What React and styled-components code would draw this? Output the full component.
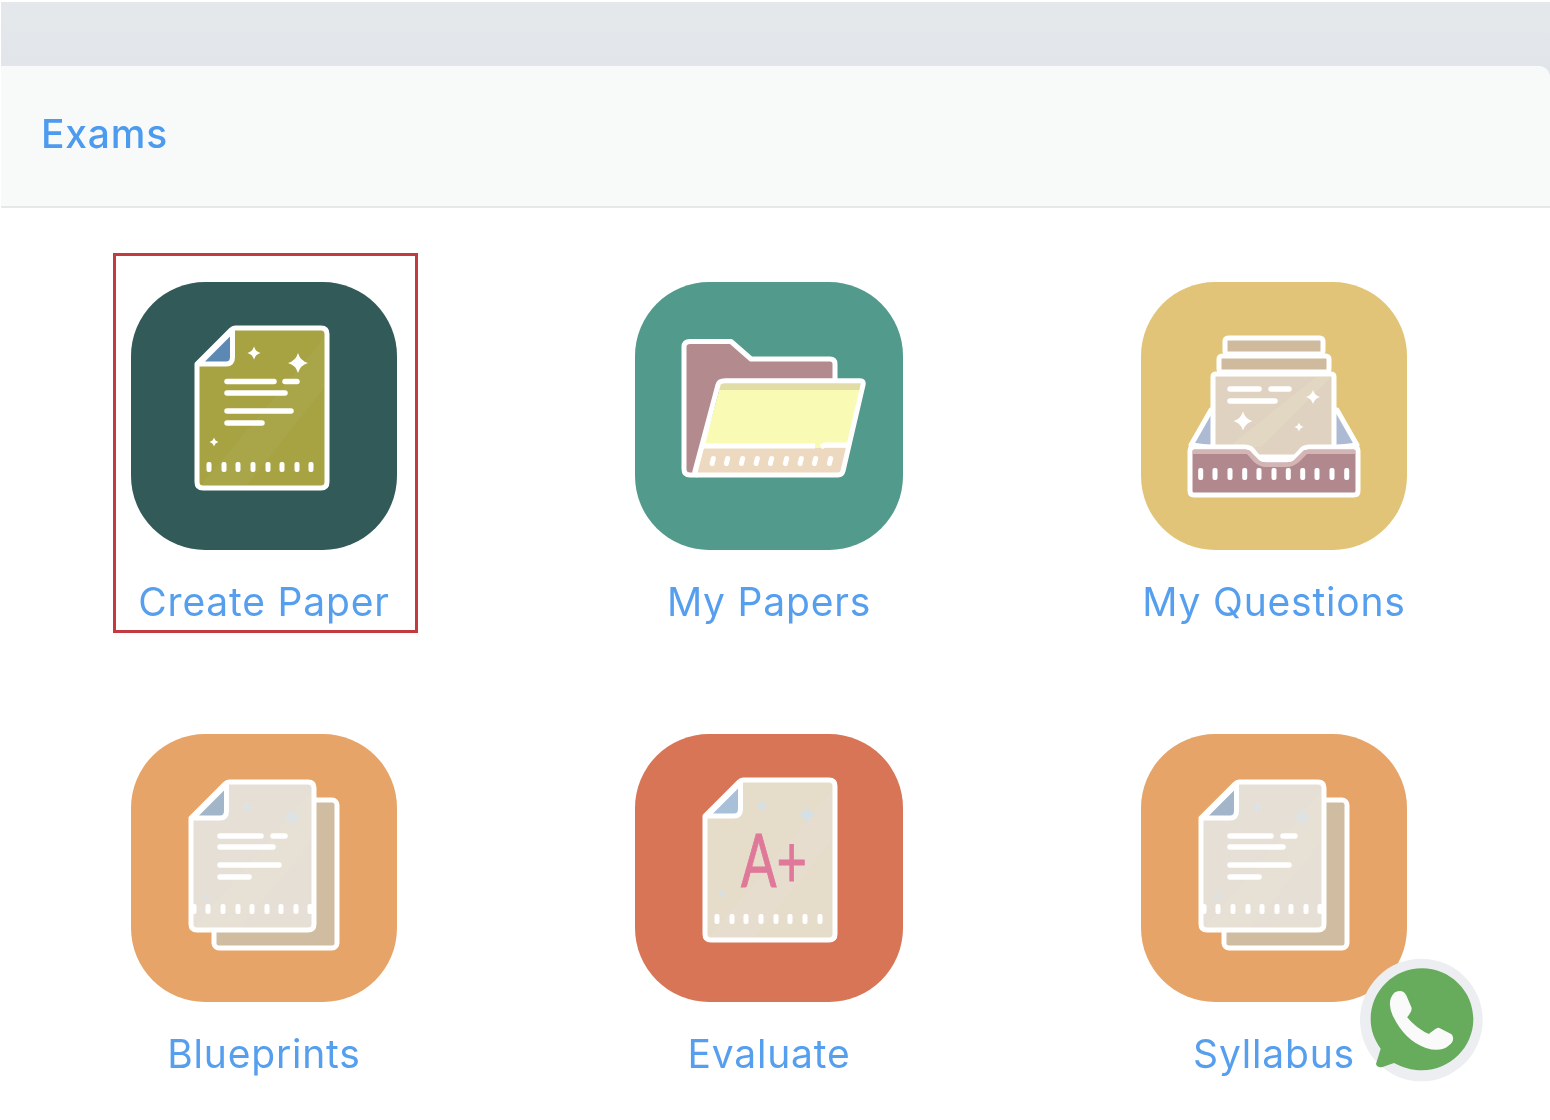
import React from 'react';
import styled, { createGlobalStyle } from 'styled-components';

const GlobalStyle = createGlobalStyle`
  html, body {
    margin: 0;
    padding: 0;
    background: #ffffff;
  }
  body {
    font-family: Inter, "Noto Sans", sans-serif;
  }
`;

const Page = styled.div`
  position: relative;
  display: flex;
  flex-direction: column;
  width: 1550px;
  height: 1120px;
  overflow: hidden;
  padding-top: 2px;
  box-sizing: border-box;
  background: #ffffff linear-gradient(180deg, #ffffff 0, #ffffff 2px, #e5e8eb 2px, #e1e5ea 76px, #ffffff 76px) 1px 0 no-repeat;
`;

const Card = styled.section`
  flex: 1;
  margin: 64px 0 0 1px;
  background: #ffffff;
  border-radius: 0 12px 0 0;
`;

const CardHeader = styled.header`
  height: 142px;
  display: flex;
  align-items: center;
  padding: 0 0 5px 40px;
  box-sizing: border-box;
  background: #f8faf9;
  border-bottom: 2px solid #e6e8e8;
  border-radius: 0 12px 0 0;
`;

const Title = styled.h1`
  margin: 0;
  font-size: 39px;
  line-height: 46px;
  font-weight: 500;
  letter-spacing: 0.8px;
  color: #4d9bef;
  filter: blur(0.4px);
`;

const Grid = styled.div`
  display: grid;
  grid-template-columns: repeat(3, 505px);
  grid-auto-rows: 452px;
  padding: 74px 0 0 10.5px;
`;

const Item = styled.a`
  display: flex;
  flex-direction: column;
  align-items: center;
  color: #559fee;
  text-decoration: none;
`;

const Tile = styled.div`
  width: ${(p) => (p.$wide ? 268 : 266)}px;
  height: 268px;
  border-radius: 74px;
  background: ${(p) => p.$color};
  display: flex;
  align-items: center;
  justify-content: center;
`;

const Label = styled.span`
  margin-top: 28px;
  font-size: 39px;
  line-height: 48px;
  letter-spacing: 0.8px;
  white-space: nowrap;
  filter: blur(0.4px);
`;

const FooterStrip = styled.footer`
  height: 12px;
  background: #f8f9fd;
`;

const FocusBox = styled.span`
  position: absolute;
  left: 113px;
  top: 253px;
  width: 305px;
  height: 380px;
  box-sizing: border-box;
  border: 3px solid #c23b3e;
  pointer-events: none;
`;

const Chat = styled.svg`
  position: absolute;
  left: 1340px;
  top: 940px;
  width: 160px;
  height: 160px;
  filter: blur(0.4px);
`;

const Art = styled.svg`
  display: block;
  width: 100%;
  height: 100%;
  filter: blur(0.6px);
`;

// four pointed star used on the paper sheets
const Spark = ({ x, y, r, fill = '#fff' }) => {
  const k = r * 0.22;
  return (
    <path
      fill={fill}
      d={`M${x} ${y - r}Q${x + k} ${y - k} ${x + r} ${y}Q${x + k} ${y + k} ${x} ${y + r}Q${x - k} ${y + k} ${x - r} ${y}Q${x - k} ${y - k} ${x} ${y - r}Z`}
    />
  );
};

const Ticks = ({ xs, y, h = 10, skew = 0 }) => (
  <g fill="#fff">
    {xs.map((x) => (
      <rect key={x} x={x - 2.5} y={y - h / 2} width="5" height={h} rx="2" transform={skew ? `rotate(${skew} ${x} ${y})` : undefined} />
    ))}
  </g>
);

const Lines = ({ rows }) => (
  <g stroke="#fff" strokeWidth="5.500" strokeLinecap="round">
    {rows.map(([x1, x2, y]) => (
      <line key={`${x1}-${y}`} x1={x1 + 2} x2={x2 - 2} y1={y} y2={y} />
    ))}
  </g>
);

// page with a folded corner; dx,dy moves it inside the tile
const Sheet = ({ dx = 0, dy = 0, w = 130, h = 160, fill, stripe, fold }) => (
  <g transform={`translate(${dx} ${dy})`}>
    <path
      d={`M0 36L34 2Q36 0 38 0H${w - 6}Q${w} 0 ${w} 6V${h - 6}Q${w} ${h} ${w - 6} ${h}H6Q0 ${h} 0 ${h - 6}Z`}
      fill={fill}
      stroke="#fff"
      strokeWidth="5"
      strokeLinejoin="round"
    />
    <path d={`M${w - 3} 10L${w - 3} 60L50 ${h - 3}L4 ${h - 3}Z`} fill={stripe} opacity="0.55" />
    <path
      d="M2 36L35.500 2.500V29Q35.500 36 29 36Z"
      fill={fold}
      stroke="#fff"
      strokeWidth="5"
      strokeLinejoin="round"
    />
  </g>
);

const CreatePaperArt = () => (
  <Art viewBox="0 0 266 268">
    <Sheet dx={66} dy={46} fill="#a8a342" stripe="#aaa850" fold="#5c88b4" />
    <Spark x={123} y={71} r={6.5} />
    <Spark x={167} y={81} r={10} />
    <Spark x={83} y={160} r={4.5} />
    <Lines rows={[[94, 145, 99.5], [152, 168, 99.5], [94, 156, 111], [94, 162, 129], [94, 133, 141]]} />
    <Ticks xs={[78, 93, 107, 122, 137, 151, 166, 180]} y={185} />
  </Art>
);

const MyPapersArt = () => (
  <Art viewBox="0 0 268 268">
    <path
      d="M49 65Q49 59.500 55 59.500H96L116 77H195Q200 77 200 82V100H90L62 193H55Q49 193 49 187Z"
      fill="#b38b8f"
      stroke="#fff"
      strokeWidth="5"
      strokeLinejoin="round"
    />
    <path d="M86.700 98.700H228L206.700 193H62Z" fill="#f9fbb5" />
    <path d="M86.700 98.700H228L225.900 108H84Z" fill="#e2dca6" />
    <path d="M69 166H212.800L206.700 193H62Z" fill="#edd9bf" />
    <path d="M69 164H180M186 165L190 163H212" stroke="#fff" strokeWidth="5" fill="none" />
    <path
      d="M90 98.700H225Q229 98.700 228 103L208 189Q207 193 203 193H63Q59 193 60 189L83 103Q84 98.700 90 98.700Z"
      fill="none"
      stroke="#fff"
      strokeWidth="5"
      strokeLinejoin="round"
    />
    <Ticks xs={[77.700, 92, 107, 121.700, 136, 151, 165.700, 180, 195]} y={179} h={10} skew={14} />
  </Art>
);

const MyQuestionsArt = () => (
  <Art viewBox="0 0 266 268">
    <g stroke="#fff" strokeWidth="5" strokeLinejoin="round">
      <rect x="84" y="56" width="98" height="16" rx="3" fill="#cfba9e" />
      <rect x="78" y="74" width="110" height="16" rx="3" fill="#cfba9e" />
      <path d="M70 128L50 163L74 166V128Z" fill="#acbbd3" />
      <path d="M196 128L216 163L192 166V128Z" fill="#acbbd3" />
      <path d="M72 95Q72 92 75 92H190Q193 92 193 95V175H72Z" fill="#e0d2c0" />
    </g>
    <path d="M88 165L175 95H190L120 165Z" fill="#e2d7c2" />
    <Lines rows={[[87, 120, 107], [128, 150, 107], [87, 136, 119]]} />
    <Spark x={102} y={139} r={9.500} />
    <Spark x={172} y={115} r={7} />
    <Spark x={158} y={145} r={4.500} />
    <path
      d="M53 165H104Q110 165 113 170L117 175Q120 178 125 178H146Q151 178 154 175L159 170Q162 165 168 165H213Q217 165 217 169V209Q217 213 213 213H53Q49 213 49 209V169Q49 165 53 165Z"
      fill="#b2888f"
      stroke="#fff"
      strokeWidth="5"
      strokeLinejoin="round"
    />
    <path d="M52 168H108L116 176Q120 181 126 181H145Q151 181 155 176L163 168H214V172H166L158 180Q152 185 146 185H125Q119 185 113 180L106 172H52Z" fill="#d4b5b5" />
    <Ticks xs={[59.700, 74, 89, 103.700, 118, 133, 147.300, 161.700, 176, 191, 205.700]} y={192} h={12} />
  </Art>
);

const BlueprintsArt = () => (
  <Art viewBox="0 0 266 268">
    <rect x="83" y="66" width="123" height="148" rx="5" fill="#d0bca0" stroke="#fff" strokeWidth="5" />
    <Sheet dx={60} dy={48} w={123} h={148} fill="#e6dfd6" stripe="#e8e2d6" fold="#a3b6c9" />
    <Spark x={161} y={83} r={9} fill="#dde2e5" />
    <Spark x={116} y={73} r={6} fill="#dde2e5" />
    <Spark x={76} y={162} r={4} fill="#dde2e5" />
    <Lines rows={[[87, 132, 102], [140, 156, 102], [87, 144, 113], [87, 150, 131], [87, 120, 143]]} />
    <Ticks xs={[63, 77, 92, 107, 121, 136, 150, 165, 179]} y={175} />
  </Art>
);

const EvaluateArt = () => (
  <Art viewBox="0 0 268 268">
    <Sheet dx={70} dy={46} fill="#e5dcca" stripe="#e8dfd2" fold="#a8c0d8" />
    <Spark x={172} y={81} r={9} fill="#d4e0e6" />
    <Spark x={127} y={72} r={6} fill="#d4e0e6" />
    <Spark x={87} y={160} r={4} fill="#d4e0e6" />
    <text
      x="106"
      y="153"
      fontFamily="Lato, sans-serif"
      fontSize="74"
      fill="#e0789a"
      stroke="#e0789a"
      strokeWidth="1"
      textLength="66"
      lengthAdjust="spacingAndGlyphs"
    >
      A+
    </text>
    <Ticks xs={[82, 97, 111, 126, 141, 155, 170, 185]} y={185} />
  </Art>
);

const items = [
  { label: 'Create Paper', color: '#325a59', Art: CreatePaperArt },
  { label: 'My Papers', color: '#529a8c', Art: MyPapersArt, wide: true },
  { label: 'My Questions', color: '#e1c477', Art: MyQuestionsArt },
  { label: 'Blueprints', color: '#e7a469', Art: BlueprintsArt },
  { label: 'Evaluate', color: '#d87556', Art: EvaluateArt, wide: true },
  { label: 'Syllabus', color: '#e7a469', Art: BlueprintsArt },
];

export default function App() {
  return (
    <Page>
      <GlobalStyle />
      <Card>
        <CardHeader>
          <Title>Exams</Title>
        </CardHeader>
        <Grid>
          {items.map(({ label, color, Art: Icon, wide }) => (
            <Item key={label} href="#">
              <Tile $color={color} $wide={wide}>
                <Icon />
              </Tile>
              <Label>{label}</Label>
            </Item>
          ))}
        </Grid>
      </Card>
      <FooterStrip />
      <FocusBox />
      <Chat viewBox="0 0 480 480">
        <circle cx="244" cy="240" r="184" fill="#eceef1" />
        <path
          d="M246 85C330 85 400 153 400 238C400 322 330 391 246 391C215 391 187 382 162 369L128 381Q112 384 108 372L122 326C103 300 92 270 92 238C92 153 161 85 246 85Z"
          fill="#67ab5c"
        />
        <path
          d="M168 163Q185 155 192 168L208 205Q208 215 192 232Q228 276 268 290Q285 275 295 270L330 288Q337 300 322 311Q300 330 260 317Q200 297 165 225Q147 185 168 163Z"
          fill="#fafafa"
          stroke="#fafafa"
          strokeWidth="14"
          strokeLinejoin="round"
        />
      </Chat>
    </Page>
  );
}
